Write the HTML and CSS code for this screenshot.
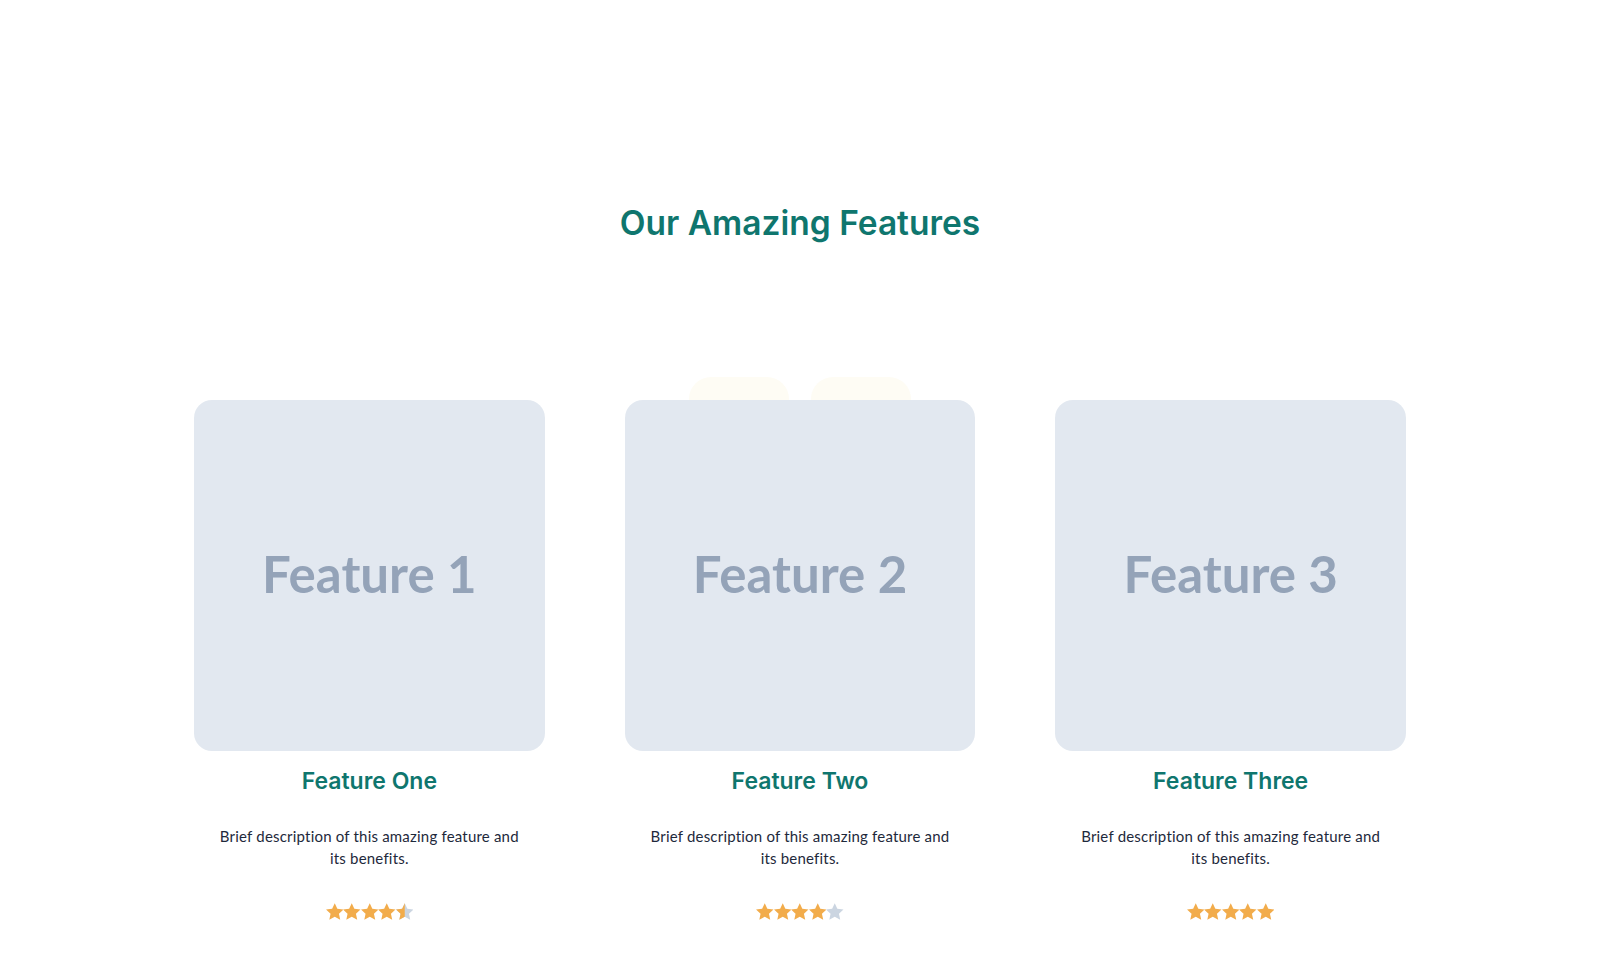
FILE: index.html
```html
<!DOCTYPE html>
<html lang="en">
<head>
<meta charset="utf-8">
<title>Our Amazing Features</title>
<link rel="stylesheet" href="styles.css">
</head>
<body>
<section class="features">
  <h2 class="features-title">Our Amazing Features</h2>
  <div class="tabs">
    <span class="tab"></span>
    <span class="tab"></span>
  </div>
  <div class="grid">
    <article class="card">
      <div class="thumb"><span>Feature 1</span></div>
      <h3 class="card-title">Feature One</h3>
      <p class="card-desc">Brief description of this amazing feature and its benefits.</p>
      <div class="stars" aria-label="4.5 stars">
        <svg class="star" viewBox="2.2 2 19.6 18.6"><path class="on" d="M12 2l2.9 6.3 6.9.8-5.1 4.7 1.4 6.8L12 17.2 5.9 20.6l1.4-6.8L2.2 9.1l6.9-.8z"/></svg>
        <svg class="star" viewBox="2.2 2 19.6 18.6"><path class="on" d="M12 2l2.9 6.3 6.9.8-5.1 4.7 1.4 6.8L12 17.2 5.9 20.6l1.4-6.8L2.2 9.1l6.9-.8z"/></svg>
        <svg class="star" viewBox="2.2 2 19.6 18.6"><path class="on" d="M12 2l2.9 6.3 6.9.8-5.1 4.7 1.4 6.8L12 17.2 5.9 20.6l1.4-6.8L2.2 9.1l6.9-.8z"/></svg>
        <svg class="star" viewBox="2.2 2 19.6 18.6"><path class="on" d="M12 2l2.9 6.3 6.9.8-5.1 4.7 1.4 6.8L12 17.2 5.9 20.6l1.4-6.8L2.2 9.1l6.9-.8z"/></svg>
        <svg class="star" viewBox="2.2 2 19.6 18.6"><defs><clipPath id="half"><rect x="0" y="0" width="12" height="24"/></clipPath></defs><path class="off" d="M12 2l2.9 6.3 6.9.8-5.1 4.7 1.4 6.8L12 17.2 5.9 20.6l1.4-6.8L2.2 9.1l6.9-.8z"/><path class="on" clip-path="url(#half)" d="M12 2l2.9 6.3 6.9.8-5.1 4.7 1.4 6.8L12 17.2 5.9 20.6l1.4-6.8L2.2 9.1l6.9-.8z"/></svg>
      </div>
    </article>
    <article class="card">
      <div class="thumb"><span>Feature 2</span></div>
      <h3 class="card-title">Feature Two</h3>
      <p class="card-desc">Brief description of this amazing feature and its benefits.</p>
      <div class="stars" aria-label="4 stars">
        <svg class="star" viewBox="2.2 2 19.6 18.6"><path class="on" d="M12 2l2.9 6.3 6.9.8-5.1 4.7 1.4 6.8L12 17.2 5.9 20.6l1.4-6.8L2.2 9.1l6.9-.8z"/></svg>
        <svg class="star" viewBox="2.2 2 19.6 18.6"><path class="on" d="M12 2l2.9 6.3 6.9.8-5.1 4.7 1.4 6.8L12 17.2 5.9 20.6l1.4-6.8L2.2 9.1l6.9-.8z"/></svg>
        <svg class="star" viewBox="2.2 2 19.6 18.6"><path class="on" d="M12 2l2.9 6.3 6.9.8-5.1 4.7 1.4 6.8L12 17.2 5.9 20.6l1.4-6.8L2.2 9.1l6.9-.8z"/></svg>
        <svg class="star" viewBox="2.2 2 19.6 18.6"><path class="on" d="M12 2l2.9 6.3 6.9.8-5.1 4.7 1.4 6.8L12 17.2 5.9 20.6l1.4-6.8L2.2 9.1l6.9-.8z"/></svg>
        <svg class="star" viewBox="2.2 2 19.6 18.6"><path class="off" d="M12 2l2.9 6.3 6.9.8-5.1 4.7 1.4 6.8L12 17.2 5.9 20.6l1.4-6.8L2.2 9.1l6.9-.8z"/></svg>
      </div>
    </article>
    <article class="card">
      <div class="thumb"><span>Feature 3</span></div>
      <h3 class="card-title">Feature Three</h3>
      <p class="card-desc">Brief description of this amazing feature and its benefits.</p>
      <div class="stars" aria-label="5 stars">
        <svg class="star" viewBox="2.2 2 19.6 18.6"><path class="on" d="M12 2l2.9 6.3 6.9.8-5.1 4.7 1.4 6.8L12 17.2 5.9 20.6l1.4-6.8L2.2 9.1l6.9-.8z"/></svg>
        <svg class="star" viewBox="2.2 2 19.6 18.6"><path class="on" d="M12 2l2.9 6.3 6.9.8-5.1 4.7 1.4 6.8L12 17.2 5.9 20.6l1.4-6.8L2.2 9.1l6.9-.8z"/></svg>
        <svg class="star" viewBox="2.2 2 19.6 18.6"><path class="on" d="M12 2l2.9 6.3 6.9.8-5.1 4.7 1.4 6.8L12 17.2 5.9 20.6l1.4-6.8L2.2 9.1l6.9-.8z"/></svg>
        <svg class="star" viewBox="2.2 2 19.6 18.6"><path class="on" d="M12 2l2.9 6.3 6.9.8-5.1 4.7 1.4 6.8L12 17.2 5.9 20.6l1.4-6.8L2.2 9.1l6.9-.8z"/></svg>
        <svg class="star" viewBox="2.2 2 19.6 18.6"><path class="on" d="M12 2l2.9 6.3 6.9.8-5.1 4.7 1.4 6.8L12 17.2 5.9 20.6l1.4-6.8L2.2 9.1l6.9-.8z"/></svg>
      </div>
    </article>
  </div>
</section>
</body>
</html>
```
FILE: styles.css
```css
* { box-sizing: border-box; }
html, body { margin: 0; padding: 0; background: #ffffff; }
body {
  font-family: "Lato", "Inter", sans-serif;
  color: #1e293b;
}
.features {
  max-width: 1280px;
  margin: 0 auto;
  padding: 203px 32px 40px;
}
.features-title {
  margin: 0;
  text-align: center;
  font-family: "Inter", sans-serif;
  font-weight: 600;
  font-size: 33.5px;
  line-height: 40px;
  color: #0f766e;
  letter-spacing: 0;
}
.tabs {
  display: flex;
  justify-content: center;
  gap: 22px;
  margin-top: 134px;
  height: 44px;
}
.tab {
  width: 100px;
  height: 44px;
  border-radius: 22px;
  background: #fefcf4;
}
.grid {
  display: grid;
  grid-template-columns: repeat(3, 1fr);
  gap: 80px;
  max-width: 1212px;
  margin: -21px auto 0;
}
.card {
  display: flex;
  flex-direction: column;
  align-items: center;
  text-align: center;
}
.thumb {
  width: 100%;
  aspect-ratio: 1 / 1;
  background: #e2e8f0;
  border-radius: 18px;
  display: flex;
  align-items: center;
  justify-content: center;
  padding-bottom: 4px;
}
.thumb span {
  font-family: "Lato", sans-serif;
  font-weight: 700;
  font-size: 51px;
  color: #94a3b8;
}
.card-title {
  margin: 16px 0 0;
  font-family: "Inter", sans-serif;
  font-weight: 600;
  font-size: 23px;
  line-height: 29px;
  color: #0f766e;
  letter-spacing: 0;
}
.card-desc {
  margin: 29px 0 0;
  max-width: 310px;
  font-size: 15px;
  line-height: 22px;
  letter-spacing: 0.2px;
  color: #1e293b;
}
.stars {
  display: flex;
  gap: 0;
  margin-top: 34px;
}
.star {
  width: 17.5px;
  height: 17px;
  display: block;
}
.star .on { fill: #f2ac4b; }
.star .off { fill: #cbd5e1; }
```
